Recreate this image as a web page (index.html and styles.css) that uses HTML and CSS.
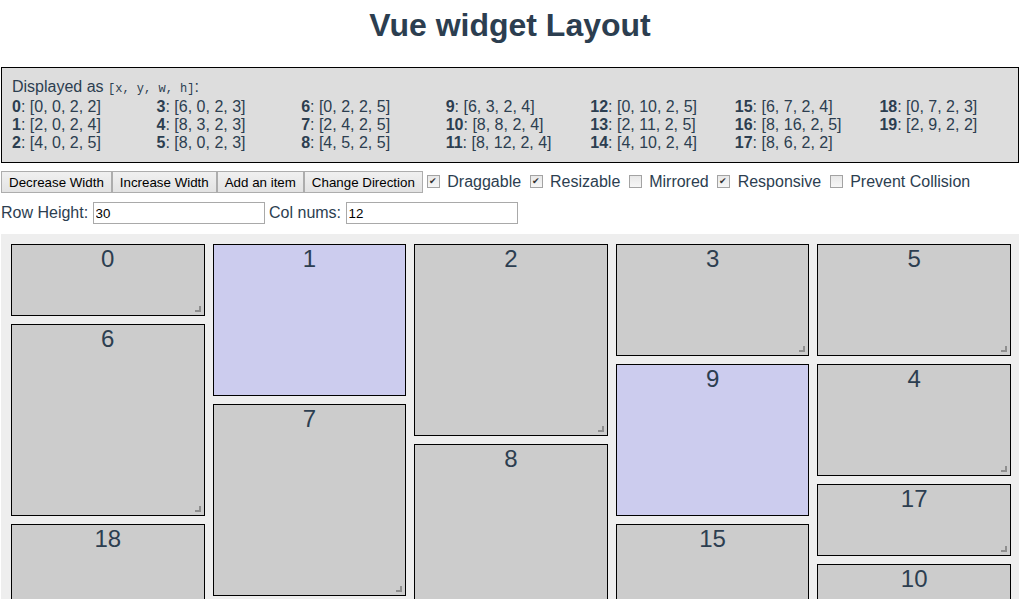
FILE: index.html
```html
<!DOCTYPE html>
<html lang="en">
<head>
    <meta charset="UTF-8">
    <meta name="viewport" content="width=device-width, initial-scale=1.0">
    <title>Vue widget Layout</title>
    <link rel="stylesheet" href="styles.css">
</head>
<body>
    <h1>Vue widget Layout</h1>

    <div class="layout-json">
        Displayed as <code>[x, y, w, h]</code>:
        <div class="columns" id="layoutList"></div>
    </div>

    <div class="controls"><button>Decrease Width</button><button>Increase Width</button><button>Add an item</button><button>Change Direction</button><label><input type="checkbox" checked> Draggable</label> <label><input type="checkbox" checked> Resizable</label> <label><input type="checkbox"> Mirrored</label> <label><input type="checkbox" checked> Responsive</label> <label><input type="checkbox"> Prevent Collision</label></div>

    <div class="settings">
        Row Height: <input type="text" value="30"> Col nums: <input type="text" value="12">
    </div>

    <div class="grid" id="grid"></div>

    <script>
        // x, y, w, h por cada widget
        const layout = [
            { i: 0, x: 0, y: 0, w: 2, h: 2 },
            { i: 1, x: 2, y: 0, w: 2, h: 4, static: true },
            { i: 2, x: 4, y: 0, w: 2, h: 5 },
            { i: 3, x: 6, y: 0, w: 2, h: 3 },
            { i: 4, x: 8, y: 3, w: 2, h: 3 },
            { i: 5, x: 8, y: 0, w: 2, h: 3 },
            { i: 6, x: 0, y: 2, w: 2, h: 5 },
            { i: 7, x: 2, y: 4, w: 2, h: 5 },
            { i: 8, x: 4, y: 5, w: 2, h: 5 },
            { i: 9, x: 6, y: 3, w: 2, h: 4, static: true },
            { i: 10, x: 8, y: 8, w: 2, h: 4 },
            { i: 11, x: 8, y: 12, w: 2, h: 4 },
            { i: 12, x: 0, y: 10, w: 2, h: 5 },
            { i: 13, x: 2, y: 11, w: 2, h: 5 },
            { i: 14, x: 4, y: 10, w: 2, h: 4 },
            { i: 15, x: 6, y: 7, w: 2, h: 4 },
            { i: 16, x: 8, y: 16, w: 2, h: 5 },
            { i: 17, x: 8, y: 6, w: 2, h: 2 },
            { i: 18, x: 0, y: 7, w: 2, h: 3 },
            { i: 19, x: 2, y: 9, w: 2, h: 2 }
        ];

        const list = document.getElementById('layoutList');
        const grid = document.getElementById('grid');

        layout.forEach(item => {
            const row = document.createElement('div');
            row.className = 'layout-item';
            row.innerHTML = `<b>${item.i}</b>: [${item.x}, ${item.y}, ${item.w}, ${item.h}]`;
            list.appendChild(row);

            const box = document.createElement('div');
            box.className = item.static ? 'grid-item static' : 'grid-item';
            box.style.gridColumn = `${item.x + 1} / span ${item.w}`;
            box.style.gridRow = `${item.y + 1} / span ${item.h}`;
            box.innerHTML = `<span class="text">${item.i}</span>`;
            if (!item.static) {
                const handle = document.createElement('span');
                handle.className = 'resize-handle';
                box.appendChild(handle);
            }
            grid.appendChild(box);
        });
    </script>
</body>
</html>
```

FILE: styles.css
```css
body {
    font-family: 'Liberation Sans', Arial, Helvetica, sans-serif;
    color: #2c3e50;
    margin: 0 2px 0 1px;
    font-size: 16px;
}

h1 {
    font-size: 32px;
    text-align: center;
    margin: 7px 0 23px;
}

.layout-json {
    background: #ddd;
    border: 1px solid #000;
    padding: 10px;
    line-height: 18px;
}

.layout-json code {
    font-family: 'Liberation Mono', 'Courier New', monospace;
    font-size: 12px;
}

.columns {
    columns: 120px;
    column-gap: 16px;
}

.controls {
    margin-top: 8px;
    line-height: 22px;
    height: 22px;
}

button {
    font-family: 'Liberation Sans', Arial, sans-serif;
    font-size: 13.33px;
    color: #000;
    height: 22px;
    margin: 0;
    padding: 1px 7px;
    border: 1px solid #adadad;
    background: linear-gradient(#f0f0f0, #e3e3e3);
    vertical-align: top;
}

input[type="checkbox"] {
    appearance: none;
    -webkit-appearance: none;
    position: relative;
    width: 13px;
    height: 13px;
    margin: 0 3px 0 4px;
    border: 1px solid #a3a3a3;
    background: linear-gradient(#e8e8e8, #f6f6f6);
    vertical-align: -1px;
}

input[type="checkbox"]:checked::before {
    content: '\2714';
    position: absolute;
    left: 1px;
    top: 0;
    font-size: 9px;
    line-height: 11px;
    color: #333;
}

.settings {
    margin-top: 9px;
    line-height: 22px;
}

.settings input {
    box-sizing: border-box;
    width: 172px;
    height: 22px;
    border: 1px solid #a9a9a9;
    padding: 1px 2px;
    font-family: 'Liberation Sans', Arial, sans-serif;
    font-size: 13.33px;
    color: #000;
    vertical-align: top;
}

.grid {
    margin-top: 10px;
    background: #eee;
    display: grid;
    grid-template-columns: repeat(10, 1fr);
    grid-auto-rows: 32px;
    gap: 8px;
    padding: 10px 8px 10px 10px;
}

.grid-item {
    position: relative;
    background: #ccc;
    border: 1px solid #000;
}

.grid-item.static {
    background: #cce;
}

.grid-item .text {
    display: block;
    font-size: 24px;
    text-align: center;
}

.resize-handle {
    position: absolute;
    right: 3px;
    bottom: 3px;
    width: 4px;
    height: 4px;
    border-right: 2px solid rgba(0, 0, 0, 0.3);
    border-bottom: 2px solid rgba(0, 0, 0, 0.3);
}
```
